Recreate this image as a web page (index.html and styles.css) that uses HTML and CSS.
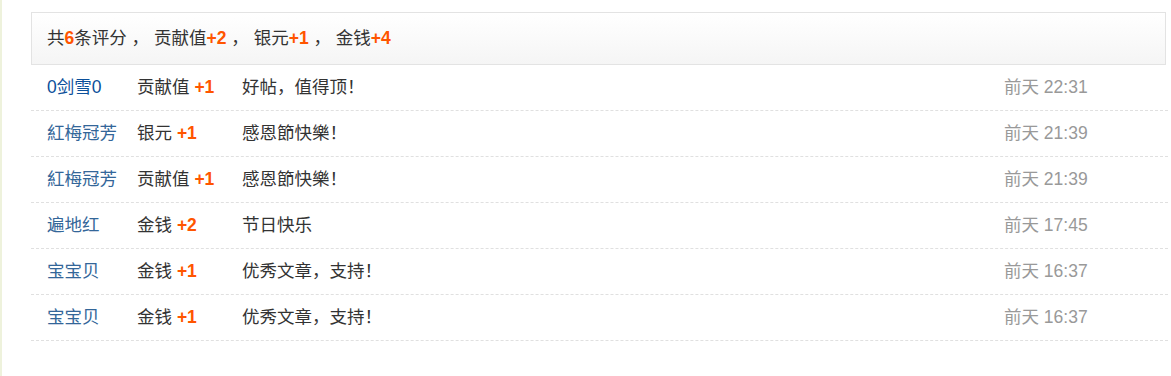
FILE: index.html
```html
<!DOCTYPE html>
<html lang="zh">
<head>
<meta charset="utf-8">
<title>评分</title>
<link rel="stylesheet" href="styles.css">
</head>
<body>
<div class="page">
  <div class="rate">
    <div class="summary">共<b class="num">6</b>条评分 ， 贡献值<b class="num">+2</b> ， 银元<b class="num">+1</b> ， 金钱<b class="num">+4</b></div>
    <ul class="list">
      <li class="row"><a class="user visited" href="#">0剑雪0</a><span class="award">贡献值 <b class="num">+1</b></span><span class="reason">好帖，值得顶！</span><span class="time">前天 22:31</span></li>
      <li class="row"><a class="user" href="#">紅梅冠芳</a><span class="award">银元 <b class="num">+1</b></span><span class="reason">感恩節快樂！</span><span class="time">前天 21:39</span></li>
      <li class="row"><a class="user" href="#">紅梅冠芳</a><span class="award">贡献值 <b class="num">+1</b></span><span class="reason">感恩節快樂！</span><span class="time">前天 21:39</span></li>
      <li class="row"><a class="user" href="#">遍地红</a><span class="award">金钱 <b class="num">+2</b></span><span class="reason">节日快乐</span><span class="time">前天 17:45</span></li>
      <li class="row"><a class="user" href="#">宝宝贝</a><span class="award">金钱 <b class="num">+1</b></span><span class="reason">优秀文章，支持！</span><span class="time">前天 16:37</span></li>
      <li class="row"><a class="user" href="#">宝宝贝</a><span class="award">金钱 <b class="num">+1</b></span><span class="reason">优秀文章，支持！</span><span class="time">前天 16:37</span></li>
    </ul>
  </div>
</div>
</body>
</html>
```
FILE: styles.css
```css
html, body {
  margin: 0;
  padding: 0;
  background: #fff;
}
body {
  font-family: "Liberation Sans", "Noto Sans CJK SC", sans-serif;
  font-size: 17.5px;
  color: #333;
}
.page {
  border-left: 2px solid #eef2dc;
  min-height: 376px;
  box-sizing: border-box;
  padding: 12px 3px 0 29px;
}
.summary {
  height: 51px;
  line-height: 51px;
  padding-left: 15px;
  border: 1px solid #e3e3e3;
  background: linear-gradient(#ffffff, #f5f5f5);
  margin-right: 2px;
  white-space: nowrap;
}
.num {
  color: #ff5500;
  font-weight: bold;
}
.list {
  list-style: none;
  margin: 0;
  padding: 0;
}
.row {
  display: grid;
  grid-template-columns: 90px 105px 1fr 164px;
  padding-left: 16px;
  height: 45px;
  line-height: 45px;
  border-bottom: 1px dashed #e0e0e0;
  white-space: nowrap;
}
.user {
  color: #336699;
  text-decoration: none;
}
.user.visited {
  color: #0b4f9a;
}
.time {
  color: #999;
}
```
